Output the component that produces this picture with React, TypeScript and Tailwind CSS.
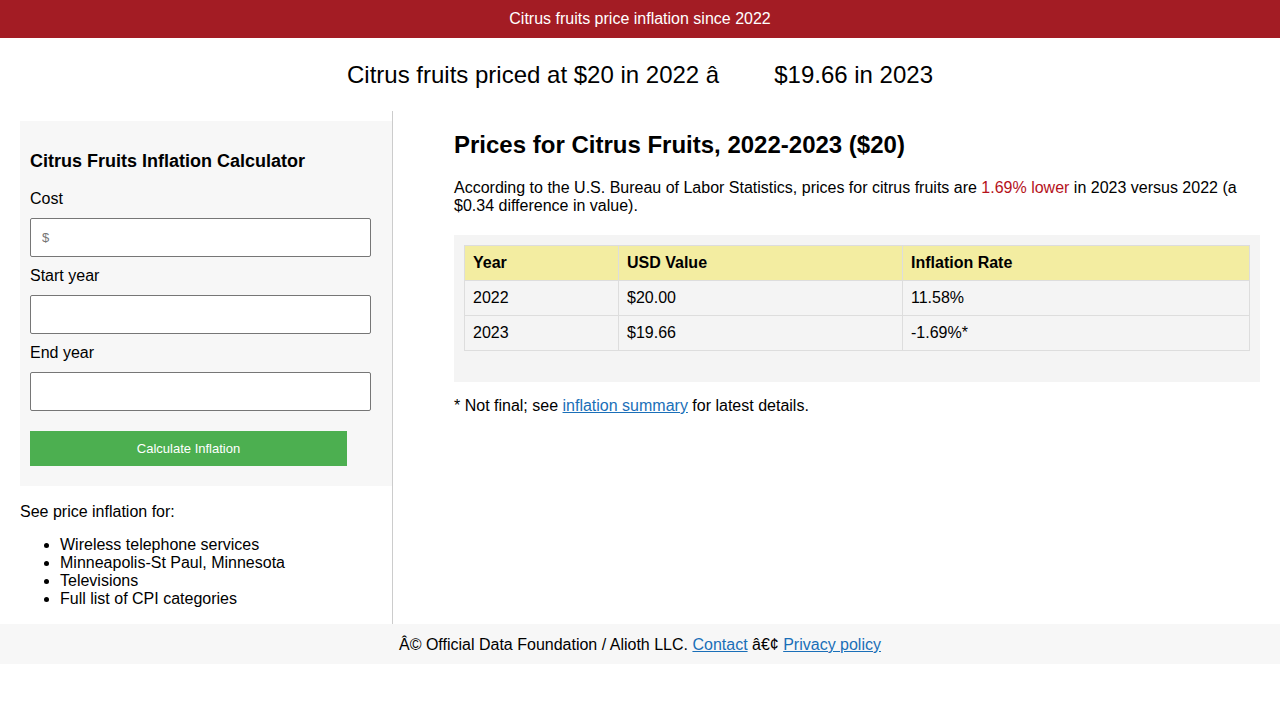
export default function App() {
  const rows = [
    { year: "2022", usd: "$20.00", rate: "11.58%" },
    { year: "2023", usd: "$19.66", rate: "-1.69%*" },
  ];

  return (
    <div className="min-h-[720px] bg-white text-black font-['Liberation_Sans',Arial,sans-serif]">
      {/* TOP BAR */}
      <div className="h-[38px] bg-[#a31c24] flex items-center justify-center text-white text-base">
        Citrus fruits price inflation since 2022
      </div>

      {/* SUBTITLE */}
      <h2 className="pt-[23px] pb-[22px] text-center text-2xl leading-[28px]">
        Citrus fruits priced at $20 in 2022 â<span className="inline-block w-[55px]"></span>$19.66 in 2023
      </h2>

      <div className="flex">
        {/* SIDEBAR */}
        <aside className="ml-5 w-[373px] border-r border-[#cccccc] pb-4">
          <div className="mt-[10px] bg-[#f7f7f7] px-[10px] pt-[30px] pb-5 w-[372px]">
            <h3 className="text-lg font-bold leading-[21px]">Citrus Fruits Inflation Calculator</h3>
            <label className="block mt-[18px] leading-[18px]">Cost</label>
            <input
              className="mt-[10px] block w-[341px] h-[39px] bg-white border border-[#767676] rounded-[2px] px-[11px] text-[13px] placeholder:text-[#757575]"
              placeholder="$"
            />
            <label className="block mt-[10px] leading-[18px]">Start year</label>
            <input className="mt-[10px] block w-[341px] h-[39px] bg-white border border-[#767676] rounded-[2px]" />
            <label className="block mt-[10px] leading-[18px]">End year</label>
            <input className="mt-[10px] block w-[341px] h-[39px] bg-white border border-[#767676] rounded-[2px]" />
            <button className="mt-5 block w-[317px] h-[35px] bg-[#4caf50] text-white text-[13px]">
              Calculate Inflation
            </button>
          </div>
          <p className="mt-[17px] leading-[18px]">See price inflation for:</p>
          <ul className="mt-[15px] list-disc pl-10 leading-[18px]">
            <li>Wireless telephone services</li>
            <li>Minneapolis-St Paul, Minnesota</li>
            <li>Televisions</li>
            <li>Full list of CPI categories</li>
          </ul>
        </aside>

        {/* MAIN */}
        <main className="flex-1 pl-[61px] pr-5">
          <h1 className="mt-5 text-2xl font-bold leading-[28px]">Prices for Citrus Fruits, 2022-2023 ($20)</h1>
          <p className="mt-5 leading-[18px]">
            According to the U.S. Bureau of Labor Statistics, prices for citrus fruits are{" "}
            <span className="text-[#b5121b]">1.69% lower</span> in 2023 versus 2022 (a $0.34 difference in value).
          </p>
          <div className="mt-5 bg-[#f4f4f4] pt-[10px] px-[10px] pb-[31px]">
            <table className="w-full border-collapse text-left leading-[18px]">
              <thead>
                <tr className="bg-[#f3eda1] h-[35px]">
                  <th className="w-[154px] border border-[#dddddd] px-2 font-bold">Year</th>
                  <th className="w-[284px] border border-[#dddddd] px-2 font-bold">USD Value</th>
                  <th className="border border-[#dddddd] px-2 font-bold">Inflation Rate</th>
                </tr>
              </thead>
              <tbody>
                {rows.map((r) => (
                  <tr key={r.year} className="h-[35px]">
                    <td className="border border-[#dddddd] px-2">{r.year}</td>
                    <td className="border border-[#dddddd] px-2">{r.usd}</td>
                    <td className="border border-[#dddddd] px-2">{r.rate}</td>
                  </tr>
                ))}
              </tbody>
            </table>
          </div>
          <p className="mt-[15px] leading-[18px]">
            * Not final; see{" "}
            <a href="#" className="text-[#1a6fb8] underline">inflation summary</a> for latest details.
          </p>
        </main>
      </div>

      {/* FOOTER */}
      <footer className="h-10 pt-[2px] bg-[#f7f7f7] flex items-center justify-center">
        Â© Official Data Foundation / Alioth LLC.&nbsp;
        <a href="#" className="text-[#1a6fb8] underline">Contact</a>&nbsp;â€¢&nbsp;
        <a href="#" className="text-[#1a6fb8] underline">Privacy policy</a>
      </footer>
    </div>
  );
}
